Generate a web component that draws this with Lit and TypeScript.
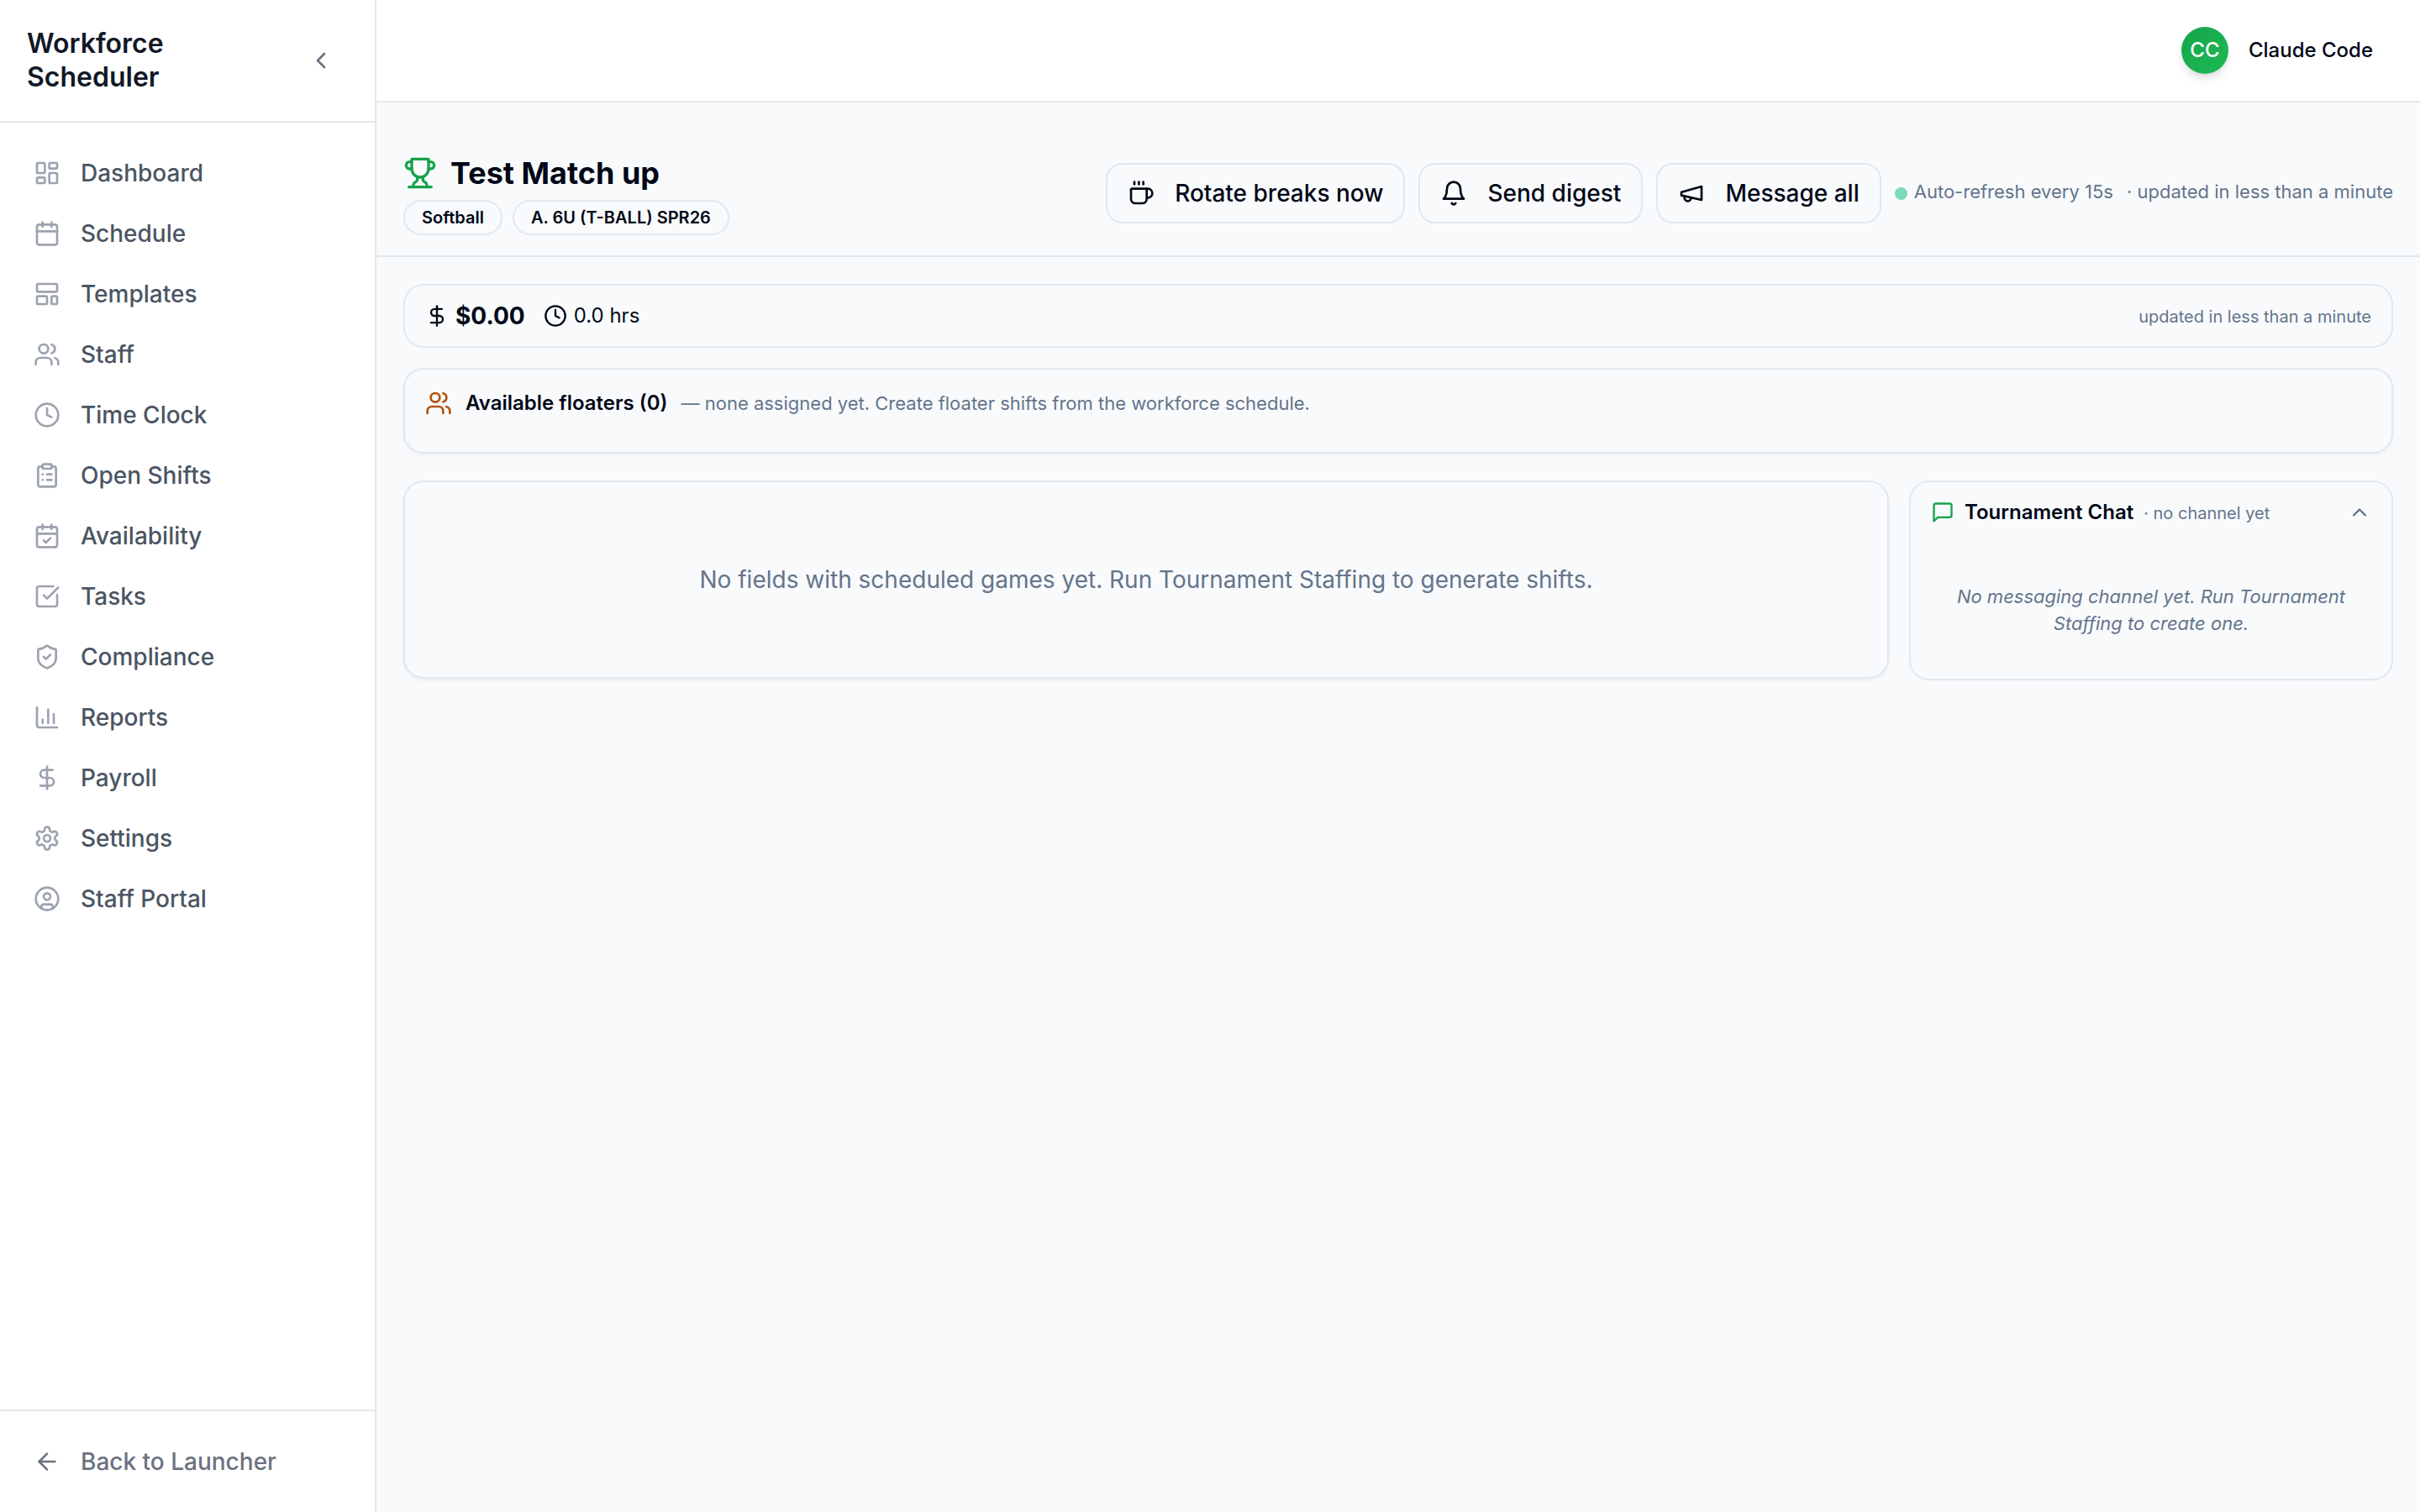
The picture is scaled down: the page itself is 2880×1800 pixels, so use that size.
import { LitElement, html, css, svg, nothing } from "lit";
import { customElement, property, state } from "lit/decorators.js";

const icons: Record<string, unknown> = {
  dashboard: svg`<rect width="7" height="9" x="3" y="3" rx="1"/><rect width="7" height="5" x="14" y="3" rx="1"/><rect width="7" height="9" x="14" y="12" rx="1"/><rect width="7" height="5" x="3" y="16" rx="1"/>`,
  calendar: svg`<path d="M8 2v4"/><path d="M16 2v4"/><rect width="18" height="18" x="3" y="4" rx="2"/><path d="M3 10h18"/>`,
  template: svg`<rect width="18" height="7" x="3" y="3" rx="1"/><rect width="9" height="7" x="3" y="14" rx="1"/><rect width="5" height="7" x="16" y="14" rx="1"/>`,
  users: svg`<path d="M16 21v-2a4 4 0 0 0-4-4H6a4 4 0 0 0-4 4v2"/><circle cx="9" cy="7" r="4"/><path d="M22 21v-2a4 4 0 0 0-3-3.87"/><path d="M16 3.13a4 4 0 0 1 0 7.75"/>`,
  clock: svg`<circle cx="12" cy="12" r="10"/><path d="M12 6v6l4 2"/>`,
  clipboard: svg`<rect width="8" height="4" x="8" y="2" rx="1" ry="1"/><path d="M16 4h2a2 2 0 0 1 2 2v14a2 2 0 0 1-2 2H6a2 2 0 0 1-2-2V6a2 2 0 0 1 2-2h2"/><path d="M12 11h4"/><path d="M12 16h4"/><path d="M8 11h.01"/><path d="M8 16h.01"/>`,
  calendarCheck: svg`<path d="M8 2v4"/><path d="M16 2v4"/><rect width="18" height="18" x="3" y="4" rx="2"/><path d="M3 10h18"/><path d="m9 16 2 2 4-4"/>`,
  task: svg`<path d="M21 10.5V19a2 2 0 0 1-2 2H5a2 2 0 0 1-2-2V5a2 2 0 0 1 2-2h12.5"/><path d="m9 11 3 3L22 4"/>`,
  shield: svg`<path d="M20 13c0 5-3.5 7.5-7.66 8.95a1 1 0 0 1-.67-.01C7.5 20.5 4 18 4 13V6a1 1 0 0 1 1-1c2 0 4.5-1.2 6.24-2.72a1.17 1.17 0 0 1 1.52 0C14.51 3.81 17 5 19 5a1 1 0 0 1 1 1z"/><path d="m9 12 2 2 4-4"/>`,
  chart: svg`<path d="M3 3v16a2 2 0 0 0 2 2h16"/><path d="M18 17V9"/><path d="M13 17V5"/><path d="M8 17v-3"/>`,
  dollar: svg`<path d="M12 2v20"/><path d="M17 5H9.5a3.5 3.5 0 0 0 0 7h5a3.5 3.5 0 0 1 0 7H6"/>`,
  settings: svg`<path d="M12.22 2h-.44a2 2 0 0 0-2 2v.18a2 2 0 0 1-1 1.73l-.43.25a2 2 0 0 1-2 0l-.15-.08a2 2 0 0 0-2.73.73l-.22.38a2 2 0 0 0 .73 2.73l.15.1a2 2 0 0 1 1 1.72v.51a2 2 0 0 1-1 1.74l-.15.09a2 2 0 0 0-.73 2.73l.22.38a2 2 0 0 0 2.73.73l.15-.08a2 2 0 0 1 2 0l.43.25a2 2 0 0 1 1 1.73V20a2 2 0 0 0 2 2h.44a2 2 0 0 0 2-2v-.18a2 2 0 0 1 1-1.73l.43-.25a2 2 0 0 1 2 0l.15.08a2 2 0 0 0 2.73-.73l.22-.39a2 2 0 0 0-.73-2.73l-.15-.08a2 2 0 0 1-1-1.74v-.5a2 2 0 0 1 1-1.74l.15-.09a2 2 0 0 0 .73-2.73l-.22-.38a2 2 0 0 0-2.73-.73l-.15.08a2 2 0 0 1-2 0l-.43-.25a2 2 0 0 1-1-1.73V4a2 2 0 0 0-2-2z"/><circle cx="12" cy="12" r="3"/>`,
  user: svg`<circle cx="12" cy="12" r="10"/><circle cx="12" cy="10" r="3"/><path d="M7 20.662V19a2 2 0 0 1 2-2h6a2 2 0 0 1 2 2v1.662"/>`,
  arrowLeft: svg`<path d="m12 19-7-7 7-7"/><path d="M19 12H5"/>`,
  chevronLeft: svg`<path d="m15 18-6-6 6-6"/>`,
  chevronUp: svg`<path d="m18 15-6-6-6 6"/>`,
  chevronDown: svg`<path d="m6 9 6 6 6-6"/>`,
  trophy: svg`<path d="M6 9H4.5a2.5 2.5 0 0 1 0-5H6"/><path d="M18 9h1.5a2.5 2.5 0 0 0 0-5H18"/><path d="M4 22h16"/><path d="M10 14.66V17c0 .55-.47.98-.97 1.21C7.85 18.75 7 20.24 7 22"/><path d="M14 14.66V17c0 .55.47.98.97 1.21C16.15 18.75 17 20.24 17 22"/><path d="M18 2H6v7a6 6 0 0 0 12 0V2Z"/>`,
  coffee: svg`<path d="M10 2v2"/><path d="M14 2v2"/><path d="M16 8a1 1 0 0 1 1 1v8a4 4 0 0 1-4 4H7a4 4 0 0 1-4-4V9a1 1 0 0 1 1-1h14a4 4 0 1 1 0 8h-1"/><path d="M6 2v2"/>`,
  bell: svg`<path d="M6 8a6 6 0 0 1 12 0c0 7 3 9 3 9H3s3-2 3-9"/><path d="M10.3 21a1.94 1.94 0 0 0 3.4 0"/>`,
  megaphone: svg`<path d="m3 11 18-5v12L3 14v-3z"/><path d="M11.6 16.8a3 3 0 1 1-5.8-1.6"/>`,
  message: svg`<path d="M21 15a2 2 0 0 1-2 2H7l-4 4V5a2 2 0 0 1 2-2h14a2 2 0 0 1 2 2z"/>`,
};

@customElement("ui-icon")
export class UiIcon extends LitElement {
  @property() name = "";

  static styles = css`
    :host {
      display: inline-flex;
      flex: none;
      width: 32px;
      height: 32px;
    }
    .glyph {
      width: 100%;
      height: 100%;
      fill: none;
      stroke: currentColor;
      stroke-width: 2;
      stroke-linecap: round;
      stroke-linejoin: round;
    }
  `;

  render() {
    return html`<svg class="glyph" viewBox="0 0 24 24" aria-hidden="true">${icons[this.name] ?? nothing}</svg>`;
  }
}

const navItems = [
  { icon: "dashboard", label: "Dashboard" },
  { icon: "calendar", label: "Schedule" },
  { icon: "template", label: "Templates" },
  { icon: "users", label: "Staff" },
  { icon: "clock", label: "Time Clock" },
  { icon: "clipboard", label: "Open Shifts" },
  { icon: "calendarCheck", label: "Availability" },
  { icon: "task", label: "Tasks" },
  { icon: "shield", label: "Compliance" },
  { icon: "chart", label: "Reports" },
  { icon: "dollar", label: "Payroll" },
  { icon: "settings", label: "Settings" },
  { icon: "user", label: "Staff Portal" },
];

const actions = [
  { icon: "coffee", label: "Rotate breaks now" },
  { icon: "bell", label: "Send digest" },
  { icon: "megaphone", label: "Message all" },
];

@customElement("app-root")
export class AppRoot extends LitElement {
  @state() private chatOpen = true;

  static styles = css`
    :host {
      display: flex;
      min-height: 100vh;
      font-family: Inter, "Liberation Sans", sans-serif;
      font-size: 24px;
      line-height: 32px;
      color: #020817;
      background: #f8fafc;
    }
    * {
      box-sizing: border-box;
    }
    h1,
    h2,
    p {
      margin: 0;
    }
    button {
      margin: 0;
      padding: 0;
      border: 0;
      background: none;
      font: inherit;
      color: inherit;
      cursor: pointer;
    }
    a {
      color: inherit;
      text-decoration: none;
    }

    .sidebar {
      display: flex;
      flex-direction: column;
      flex: none;
      width: 448px;
      background: #fff;
      border-right: 2px solid #e5e7eb;
    }
    .brand {
      display: flex;
      align-items: center;
      justify-content: space-between;
      padding: 32px;
      border-bottom: 2px solid #e5e7eb;
    }
    .brand-name {
      flex: 1;
      font-size: 32px;
      line-height: 40px;
      font-weight: 600;
      color: #111827;
    }
    .collapse {
      display: flex;
      padding: 16px;
      color: #6b7280;
    }
    .nav {
      flex: 1;
      padding: 24px 16px;
    }
    .nav-link {
      display: flex;
      align-items: center;
      gap: 24px;
      height: 72px;
      padding: 0 24px;
      font-size: 28px;
      font-weight: 500;
      color: #4b5563;
    }
    .nav-link ui-icon {
      color: #9ca3af;
    }
    .sidebar-foot {
      padding: 24px 16px;
      border-top: 2px solid #e5e7eb;
    }
    .nav-link.back,
    .nav-link.back ui-icon {
      color: #6b7280;
    }

    .page {
      display: flex;
      flex-direction: column;
      flex: 1;
      min-width: 0;
    }
    .topbar {
      display: flex;
      justify-content: flex-end;
      padding: 32px;
      background: #fff;
      border-bottom: 2px solid #e5e7eb;
    }
    .account {
      display: flex;
      align-items: center;
      gap: 24px;
      padding-right: 24px;
      font-weight: 500;
    }
    .avatar {
      display: flex;
      align-items: center;
      justify-content: center;
      width: 56px;
      height: 56px;
      border-radius: 50%;
      color: #fff;
      background: linear-gradient(135deg, #16a34a, #1dbb54);
      box-shadow: 0 8px 12px -2px rgb(0 0 0 / 0.1), 0 4px 8px -4px rgb(0 0 0 / 0.1);
    }

    .page-head {
      display: flex;
      align-items: center;
      justify-content: space-between;
      gap: 32px;
      padding: 58px 32px 24px;
      border-bottom: 2px solid #e2e8f0;
    }
    .heading {
      display: flex;
      flex-direction: column;
      gap: 6px;
    }
    .title {
      display: flex;
      align-items: center;
      gap: 16px;
      font-size: 36px;
      line-height: 52px;
      font-weight: 700;
    }
    .title ui-icon {
      width: 40px;
      height: 40px;
      color: #16a34a;
    }
    .badges,
    .tools {
      display: flex;
      align-items: center;
    }
    .badges {
      gap: 12px;
    }
    .tools {
      gap: 16px;
    }
    .badge {
      padding: 3px 20px;
      border: 2px solid #e2e8f0;
      border-radius: 24px;
      font-size: 20px;
      font-weight: 600;
    }
    .action {
      display: flex;
      align-items: center;
      gap: 24px;
      height: 72px;
      padding: 0 24px;
      border: 2px solid #e2e8f0;
      border-radius: 20px;
      font-size: 28px;
      font-weight: 500;
    }
    .refresh {
      display: flex;
      align-items: center;
      gap: 8px;
      font-size: 22px;
      color: #64748b;
    }
    .refresh-text {
      padding-bottom: 4px;
    }
    .dot {
      width: 15px;
      height: 15px;
      border-radius: 50%;
      background: #7adbb9;
    }
    .refresh-age {
      margin-left: 8px;
    }

    .content {
      display: flex;
      flex-direction: column;
      padding: 32px;
    }
    .card {
      border: 2px solid #e2e8f0;
      border-radius: 24px;
    }
    .raised {
      box-shadow: 0 2px 4px rgb(0 0 0 / 0.05);
    }
    .muted {
      color: #64748b;
    }
    .small {
      font-size: 20px;
    }
    .costs {
      display: flex;
      align-items: center;
      gap: 22px;
      padding: 20px 24px;
    }
    .metric {
      display: flex;
      align-items: center;
      gap: 8px;
    }
    .metric ui-icon,
    .chat-head ui-icon {
      width: 28px;
      height: 28px;
    }
    .amount {
      font-size: 28px;
      font-weight: 700;
    }
    .costs-age {
      margin-left: auto;
      padding-top: 2px;
      line-height: 30px;
    }
    .floaters {
      display: flex;
      align-items: center;
      gap: 16px;
      margin-top: 24px;
      padding: 24px 24px 42px;
    }
    .floaters ui-icon {
      color: #b45309;
    }
    .label {
      font-size: 24px;
      line-height: 32px;
      font-weight: 600;
    }
    .note {
      font-size: 22px;
    }
    .board {
      display: grid;
      grid-template-columns: minmax(0, 1fr) 576px;
      align-items: start;
      gap: 24px;
      margin-top: 32px;
    }
    .fields {
      padding: 96px 48px;
      font-size: 28px;
      line-height: 40px;
      text-align: center;
    }
    .chat-head {
      display: flex;
      align-items: center;
      gap: 12px;
      width: 100%;
      height: 72px;
      padding: 0 24px;
      text-align: left;
    }
    .chat-title {
      display: flex;
      align-items: baseline;
      gap: 12px;
    }
    .chat-icon {
      color: #16a34a;
    }
    .chat-toggle {
      margin-left: auto;
      color: #64748b;
    }
    .chat-body {
      padding: 48px 24px 50px;
      font-size: 22px;
      font-style: italic;
      text-align: center;
    }
  `;

  private toggleChat() {
    this.chatOpen = !this.chatOpen;
  }

  render() {
    return html`
      <aside class="sidebar">
        <div class="brand">
          <div class="brand-name">Workforce Scheduler</div>
          <button class="collapse" aria-label="Collapse sidebar">
            <ui-icon name="chevronLeft"></ui-icon>
          </button>
        </div>
        <nav class="nav">
          ${navItems.map(
            (item) => html`<a class="nav-link" href="#"><ui-icon name=${item.icon}></ui-icon>${item.label}</a>`,
          )}
        </nav>
        <div class="sidebar-foot">
          <a class="nav-link back" href="#"><ui-icon name="arrowLeft"></ui-icon>Back to Launcher</a>
        </div>
      </aside>
      <div class="page">
        <header class="topbar">
          <button class="account"><span class="avatar">CC</span>Claude Code</button>
        </header>
        <main>
          <div class="page-head">
            <div class="heading">
              <h1 class="title"><ui-icon name="trophy"></ui-icon>Test Match up</h1>
              <div class="badges">
                <span class="badge">Softball</span>
                <span class="badge">A. 6U (T-BALL) SPR26</span>
              </div>
            </div>
            <div class="tools">
              ${actions.map(
                (action) => html`<button class="action"><ui-icon name=${action.icon}></ui-icon>${action.label}</button>`,
              )}
              <div class="refresh">
                <span class="dot"></span>
                <span class="refresh-text">Auto-refresh every 15s</span>
                <span class="refresh-text refresh-age">· updated in less than a minute</span>
              </div>
            </div>
          </div>
          <div class="content">
            <section class="card costs">
              <span class="metric"><ui-icon name="dollar"></ui-icon><span class="amount">$0.00</span></span>
              <span class="metric"><ui-icon name="clock"></ui-icon>0.0 hrs</span>
              <span class="costs-age small muted">updated in less than a minute</span>
            </section>
            <section class="card raised floaters">
              <ui-icon name="users"></ui-icon>
              <h2 class="label">Available floaters (0)</h2>
              <p class="note muted">— none assigned yet. Create floater shifts from the workforce schedule.</p>
            </section>
            <div class="board">
              <section class="card raised fields muted">
                No fields with scheduled games yet. Run Tournament Staffing to generate shifts.
              </section>
              <section class="card">
                <button class="chat-head" aria-expanded=${this.chatOpen} @click=${this.toggleChat}>
                  <ui-icon class="chat-icon" name="message"></ui-icon>
                  <span class="chat-title">
                    <span class="label">Tournament Chat</span>
                    <span class="small muted">· no channel yet</span>
                  </span>
                  <ui-icon class="chat-toggle" name=${this.chatOpen ? "chevronUp" : "chevronDown"}></ui-icon>
                </button>
                ${this.chatOpen
                  ? html`<p class="chat-body muted">
                      No messaging channel yet. Run Tournament Staffing to create one.
                    </p>`
                  : nothing}
              </section>
            </div>
          </div>
        </main>
      </div>
    `;
  }
}
